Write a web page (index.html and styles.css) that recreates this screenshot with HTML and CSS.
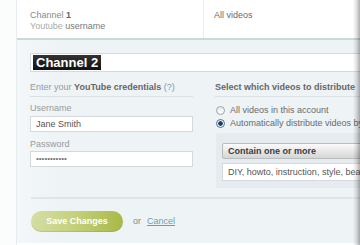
FILE: index.html
```html
<!DOCTYPE html>
<html>
<head>
<meta charset="utf-8">
<link rel="stylesheet" href="styles.css">
</head>
<body>
<div class="page">
  <div class="toprow">
    <div class="cell first">
      <div class="t1">Channel <b>1</b></div>
      <div class="t2"><span class="light">Youtube</span> username</div>
    </div>
    <div class="cell second">
      <div class="t1">All videos</div>
    </div>
  </div>
  <div class="panel">
    <div class="channel-box"><span class="channel-label">Channel 2</span></div>
    <div class="cols">
      <div class="col left">
        <div class="heading"><span class="light">Enter your</span> <b>YouTube credentials</b> <span class="help">(?)</span></div>
        <div class="field-label">Username</div>
        <div class="input">Jane Smith</div>
        <div class="field-label pw">Password</div>
        <div class="input dots">•••••••••••</div>
      </div>
      <div class="col right">
        <div class="heading"><b>Select which videos to distribute</b></div>
        <div class="radios">
          <div class="radio-row"><span class="radio"></span>All videos in this account</div>
          <div class="radio-row"><span class="radio checked"></span>Automatically distribute videos by</div>
        </div>
        <div class="filter-box">
          <div class="select">Contain one or more</div>
          <div class="input tags">DIY, howto, instruction, style, bea</div>
        </div>
      </div>
    </div>
    <div class="separator"></div>
    <div class="actions">
      <span class="save">Save Changes</span>
      <span class="or">or</span>
      <span class="cancel">Cancel</span>
    </div>
  </div>
</div>
<div class="edge-shadow"></div>
</body>
</html>
```

FILE: styles.css
```css
html, body {
  margin: 0;
  padding: 0;
}
body {
  width: 360px;
  height: 245px;
  overflow: hidden;
  position: relative;
  background: #fbfcfc;
  font-family: "Liberation Sans", Arial, sans-serif;
  font-size: 9px;
  line-height: 11px;
  color: #666;
}
.page {
  margin-left: 16px;
  width: 420px;
  height: 245px;
  border-left: 1px solid #e7eced;
  background: #fff;
}
.toprow {
  display: grid;
  grid-template-columns: 187px 1fr;
  height: 38px;
  background: #fff;
}
.cell {
  padding-top: 10px;
}
.cell.first {
  padding-left: 13px;
  border-right: 1px solid #eceeee;
}
.cell.second {
  padding-left: 10px;
}
.t1 {
  color: #8a8a8a;
  line-height: 11px;
}
.t1 b {
  color: #666;
}
.t2 {
  color: #7a7a7a;
  line-height: 11px;
}
.t2 .light {
  color: #aaa;
}
.cell.second .t1 {
  color: #6a6a6a;
}
.panel {
  border-top: 2px solid #c9d8d9;
  background: linear-gradient(to right, #f3f7f9, #eef3f6 40px, #eef3f6);
  height: 205px;
  padding: 13px 0 0 13px;
  box-sizing: border-box;
}
.channel-box {
  height: 19px;
  box-sizing: border-box;
  background: #fff;
  border: 1px solid #d3dadd;
  padding: 1px 2px;
}
.channel-label {
  display: inline-block;
  height: 15px;
  line-height: 15px;
  padding: 0 3px;
  background: linear-gradient(#333, #111);
  color: #fff;
  font-weight: bold;
  font-size: 13px;
}
.cols {
  display: grid;
  grid-template-columns: 163px 1fr;
  column-gap: 22px;
  margin-top: 10px;
}
.heading {
  padding-bottom: 3px;
  border-bottom: 1px solid #d9e1e4;
  color: #666;
  white-space: nowrap;
}
.heading .light {
  color: #999;
}
.heading .help {
  color: #6d9fb4;
}
.field-label {
  color: #9a9a9a;
  margin-top: 6px;
  margin-bottom: 2px;
}
.field-label.pw {
  margin-top: 7px;
  margin-bottom: 1px;
}
.input {
  height: 16px;
  box-sizing: border-box;
  background: #fff;
  border: 1px solid #d3d9dc;
  padding: 0 5px;
  line-height: 14px;
  color: #555;
  white-space: nowrap;
  overflow: hidden;
}
.input.dots {
  font-size: 8px;
  letter-spacing: 0;
  color: #777;
}
.radios {
  margin-top: 7px;
}
.radio-row {
  display: flex;
  align-items: center;
  height: 13px;
  gap: 5px;
  color: #6a6a6a;
  white-space: nowrap;
}
.radio {
  width: 9px;
  height: 9px;
  border-radius: 50%;
  border: 1px solid #9aa4aa;
  background: linear-gradient(#e6e9eb, #fff);
  box-sizing: border-box;
  margin-left: 1px;
}
.radio.checked {
  border-color: #4f7391;
  background: radial-gradient(circle, #1c3f6e 0, #1c3f6e 2px, #e9eef3 2.5px, #fff 5px);
}
.filter-box {
  margin-top: 3px;
  margin-left: 1px;
  background: #e5ebee;
  padding: 10px 0 7px 6px;
  border-radius: 2px;
}
.select {
  height: 16px;
  box-sizing: border-box;
  border: 1px solid #b8bdc0;
  border-radius: 2px;
  background: linear-gradient(#fbfbfb, #e4e4e4 60%, #d6d6d6);
  font-weight: bold;
  color: #3a3a3a;
  line-height: 14px;
  padding-left: 5px;
}
.input.tags {
  margin-top: 4px;
  height: 18px;
  line-height: 16px;
  color: #555;
}
.separator {
  height: 2px;
  background: #dde6ea;
  margin-top: 9px;
  margin-left: 1px;
}
.actions {
  display: flex;
  align-items: center;
  margin-top: 12px;
  margin-left: 1px;
  height: 21px;
}
.save {
  display: inline-block;
  width: 92px;
  height: 21px;
  line-height: 21px;
  border-radius: 11px;
  text-align: center;
  color: #fff;
  font-weight: bold;
  background: linear-gradient(100deg, #d6dea6 0%, #c5d27c 45%, #a7b845 100%);
  box-shadow: inset 0 -1px 0 rgba(120, 140, 30, 0.25);
}
.or {
  color: #888;
  margin-left: 10px;
}
.cancel {
  color: #6d9db5;
  text-decoration: underline;
  margin-left: 6px;
}
.edge-shadow {
  position: absolute;
  top: 0;
  right: 0;
  width: 7px;
  height: 245px;
  background: linear-gradient(to right, rgba(0,0,0,0), rgba(0,0,0,0.12) 50%, rgba(0,0,0,0.32));
}
```
